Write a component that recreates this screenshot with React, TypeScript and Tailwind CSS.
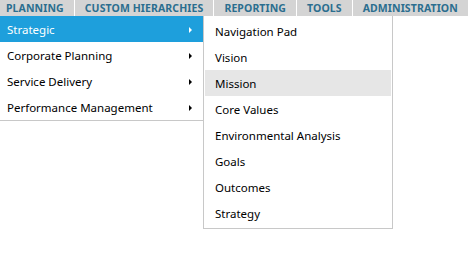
const topItems = ["PLANNING", "CUSTOM HIERARCHIES", "REPORTING", "TOOLS", "ADMINISTRATION"];
const leftItems = ["Strategic", "Corporate Planning", "Service Delivery", "Performance Management"];
const subItems = ["Navigation Pad", "Vision", "Mission", "Core Values", "Environmental Analysis", "Goals", "Outcomes", "Strategy"];

const Arrow = ({ white }: { white?: boolean }) => (
  <svg width="4" height="6" viewBox="0 0 4 6" className="shrink-0">
    <path d="M0 0 L3 3 L0 6 Z" fill={white ? "#ffffff" : "#000000"} />
  </svg>
);

export default function App() {
  return (
    <div className="w-[468px] h-[257px] bg-white overflow-hidden" style={{ fontFamily: '"Noto Sans", sans-serif' }}>
      <div className="h-[16px] bg-[#d4d4d4] flex items-center pl-[6px] whitespace-nowrap">
        {topItems.map((t, i) => (
          <div key={t} className="flex items-center">
            {i > 0 && <div className="w-px h-[16px] bg-white mx-[10px]" />}
            <span className="text-[10.5px] font-bold text-[#2b6e8f] leading-none tracking-[0.1px]">{t}</span>
          </div>
        ))}
      </div>
      <div className="flex items-start">
        <div className="w-[204px] border-r border-b border-[#c8c8c8] bg-white">
          {leftItems.map((t, i) => (
            <div
              key={t}
              className={
                "h-[26px] flex items-center justify-between pl-[7px] pr-[10px] pt-[2px] text-[11.5px] " +
                (i === 0 ? "bg-[#1e9fdc] text-white" : "text-black")
              }
            >
              <span>{t}</span>
              <Arrow white={i === 0} />
            </div>
          ))}
        </div>
        <div className="w-[190px] border border-t-0 border-[#c8c8c8] bg-white py-[2px] px-px -ml-px">
          {subItems.map((t) => (
            <div
              key={t}
              className={
                "h-[26px] flex items-center pl-[10px] pt-[2px] text-[11.5px] text-black " + (t === "Mission" ? "bg-[#e6e6e6]" : "")
              }
            >
              {t}
            </div>
          ))}
        </div>
      </div>
    </div>
  );
}
